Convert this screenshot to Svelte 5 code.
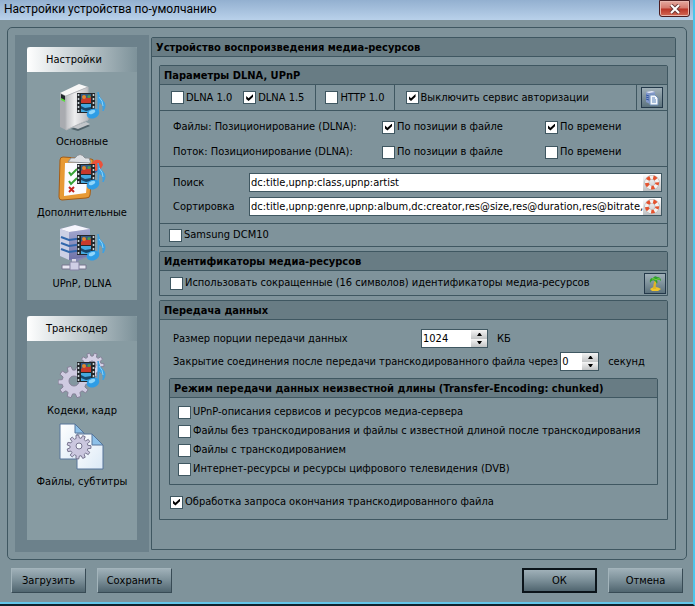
<script lang="ts">
  let dlna10 = $state(false)
  let dlna15 = $state(true)
  let http10 = $state(false)
  let noAuth = $state(true)
  let samsung = $state(false)
  let shortIds = $state(false)
  let handleEnd = $state(true)

  let search = $state('dc:title,upnp:class,upnp:artist')
  let sort = $state('dc:title,upnp:genre,upnp:album,dc:creator,res@size,res@duration,res@bitrate,dc:date')

  let chunkSize = $state(1024)
  let closeDelay = $state(0)

  let positioning = $state([
    { label: 'Файлы: Позиционирование (DLNA):', byPosition: true, byTime: true },
    { label: 'Поток: Позиционирование (DLNA):', byPosition: false, byTime: false }
  ])

  let chunked = $state([
    { label: 'UPnP-описания сервисов и ресурсов медиа-сервера', checked: false },
    { label: 'Файлы без транскодирования и файлы с известной длиной после транскодирования', checked: false },
    { label: 'Файлы с транскодированием', checked: false },
    { label: 'Интернет-ресурсы и ресурсы цифрового телевидения (DVB)', checked: false }
  ])

  const sections = [
    {
      title: 'Настройки',
      items: [
        { icon: 'server', label: 'Основные' },
        { icon: 'clipboard', label: 'Дополнительные' },
        { icon: 'network', label: 'UPnP, DLNA' }
      ]
    },
    {
      title: 'Транскодер',
      items: [
        { icon: 'gears', label: 'Кодеки, кадр' },
        { icon: 'files', label: 'Файлы, субтитры' }
      ]
    }
  ]

  // Outline of a cog wheel centred on cx, cy
  function gearPath(cx: number, cy: number, outer: number, inner: number, teeth: number) {
    const points: string[] = []
    const step = (Math.PI * 2) / teeth
    for (let i = 0; i < teeth; i++) {
      const a = i * step
      const corners = [[-0.32, inner], [-0.2, outer], [0.2, outer], [0.32, inner]]
      for (const [offset, r] of corners) {
        const x = cx + Math.cos(a + offset * step) * r
        const y = cy + Math.sin(a + offset * step) * r
        points.push(`${x.toFixed(2)} ${y.toFixed(2)}`)
      }
    }
    return `M${points.join('L')}Z`
  }
</script>

{#snippet media()}
  <rect x="19" y="10" width="18" height="20" fill="#23272b" />
  <path d="M20.5 11v18M35.5 11v18" stroke="#c9d3d8" stroke-width="1.6" stroke-dasharray="2 2" />
  <rect x="23" y="11" width="10" height="9" fill="#315a86" />
  <path d="M23 17l3-3 3 1 4-2v7H23z" fill="#c7392b" />
  <circle cx="26" cy="14" r="2" fill="#e2862e" />
  <circle cx="31" cy="13.5" r="1.6" fill="#4e9b4a" />
  <rect x="23" y="21" width="10" height="8" fill="#45a9e0" />
  <path d="M23 23l4 2 6-1v3l-5 1-5-2z" fill="#16476c" />
  <path d="M40 30V9q1 6 5 9 4 4 0 10 1-7-4-9z" fill="#3aa2e6" stroke="#3aa2e6" />
  <path d="M41 14q4 4 4 9" fill="none" stroke="#8fd4f8" />
  <ellipse cx="35" cy="30.5" rx="6.5" ry="4.8" fill="#2e9de6" transform="rotate(-22 35 30.5)" />
  <ellipse cx="34" cy="29" rx="3.4" ry="1.8" fill="#8fd6fb" transform="rotate(-22 34 29)" />
{/snippet}

{#snippet navIcon(name: string)}
  <svg class="nav-icon" viewBox="0 0 48 48" aria-hidden="true">
    {#if name === 'server'}
      <path d="M13 46l14-6 5 3-12 5z" fill="#50626a" />
      <path d="M14 44l14-5 4 2-12 5z" fill="#c3c6ca" />
      <path d="M2 10L21 1l9 3-22 9z" fill="#f7f7f7" />
      <path d="M2 10l6 3v34l-6-3z" fill="#a9abb0" />
      <path d="M8 13l22-9v33L8 47z" fill="url(#metal)" stroke="#b5b7bb" />
      <path d="M3 11l4 2v5l-4-2z" fill="#20262a" />
      <path d="M3 15l4 2v2l-4-2z" fill="#59dc3c" />
    {:else if name === 'clipboard'}
      <path d="M2 6q0-3 3-3l28 2q3 0 2 3l-3 33q0 3-4 3L4 46q-3 0-3-3z" fill="#e79a35" stroke="#a45d16" />
      <path d="M7 9l24-1-3 31-22 3z" fill="#fafcff" />
      <path d="M10 8l3-4h4q5-7 10 0h4l2 5z" fill="#dde0e4" stroke="#8b9197" />
      <path d="M11 18l2 3 6-6M11 27l2 3 6-6" fill="none" stroke="#36a235" stroke-width="2" />
      <path d="M11 33l5 5M16 33l-5 5" stroke="#c5241e" stroke-width="2" />
      <path d="M27 18l9-9 6 6-10 9z" fill="#3a65ad" />
      <path d="M33 10l4-4q7-1 8 5l-3 5-5 1z" fill="#ec513a" />
    {:else if name === 'network'}
      <path d="M2 4L17 0l15 4v27l-15 6L2 31z" fill="#8587b4" />
      <path d="M2 4l9 3v28l-9-4z" fill="#ccd0e5" />
      <path d="M11 7l21-3v27l-21 4z" fill="url(#rack)" />
      <path d="M2 4L17 0l15 4-21 3z" fill="#f5f5fc" />
      <path d="M3 12l8 3 21-3M3 18l8 3 21-3M3 24l8 3 21-3" fill="none" stroke="#3167ac" stroke-width="2" />
      <path d="M14 34h4v7h-4z" fill="#d9d9e6" />
      <path d="M4 40h24v4H4z" fill="#e8e7f2" stroke="#77778e" />
      <path d="M12 37h9v8h-9z" fill="#cfcee5" stroke="#8583a4" />
    {:else if name === 'gears'}
      <path d={gearPath(34, 13, 12, 9, 10)} fill="#d3cfe4" stroke="#858198" />
      <circle cx="34" cy="13" r="4" fill="#8397a0" stroke="#858198" />
      <path d={gearPath(16, 30, 16, 12, 10)} fill="#cfcbe1" stroke="#858198" />
      <circle cx="16" cy="29" r="5" fill="#8397a0" stroke="#858198" />
    {:else}
      <path d="M2 1h15l9 9v26H2z" fill="url(#paper)" stroke="#56759a" />
      <path d="M17 1v9h9z" fill="#8dc0e8" stroke="#56759a" />
      <path d="M19 11h15l11 11v24H19z" fill="url(#paper)" stroke="#56759a" />
      <path d="M34 11v11h11z" fill="#8dc0e8" stroke="#56759a" />
      <path d={gearPath(21, 24, 12, 9, 11)} fill="#cbc7df" stroke="#77748f" />
      <circle cx="21" cy="23" r="3" fill="#f2f6fb" stroke="#77748f" />
    {/if}
    {#if name !== 'files'}
      {@render media()}
    {/if}
  </svg>
{/snippet}

{#snippet buoy()}
  <svg viewBox="0 0 18 18" width="18" height="17" aria-hidden="true">
    <circle cx="9" cy="9" r="5.5" fill="none" stroke="#a9adb0" stroke-width="5" />
    <circle cx="9" cy="9" r="5.5" fill="none" stroke="#f3f1ef" stroke-width="4" />
    <circle
      cx="9"
      cy="9"
      r="5.5"
      fill="none"
      stroke="#e4532e"
      stroke-width="4"
      stroke-dasharray="3.4 3.51"
      stroke-dashoffset="1"
    />
  </svg>
{/snippet}

{#snippet spinner(id: string, value: number, change: (v: number) => void, small: boolean)}
  <span class="spinner" class:small>
    <input
      {id}
      type="text"
      inputmode="numeric"
      {value}
      onchange={(e) => change(Number(e.currentTarget.value) || 0)}
    />
    <span class="arrows">
      <button type="button" aria-label="Увеличить" onclick={() => change(value + 1)}>
        <svg viewBox="0 0 5 3" width="5" height="3"><path d="M0 3h5L3 0H2z" /></svg>
      </button>
      <button type="button" aria-label="Уменьшить" onclick={() => change(Math.max(0, value - 1))}>
        <svg viewBox="0 0 5 3" width="5" height="3"><path d="M0 0h5L3 3H2z" /></svg>
      </button>
    </span>
  </span>
{/snippet}

<svg class="defs" aria-hidden="true">
  <defs>
    <linearGradient id="metal">
      <stop offset="0" stop-color="#bfc0c4" />
      <stop offset="0.4" stop-color="#eeeeef" />
      <stop offset="1" stop-color="#bcbdc1" />
    </linearGradient>
    <linearGradient id="rack" x2="0" y2="1">
      <stop offset="0" stop-color="#a2a7cf" />
      <stop offset="1" stop-color="#6f72a8" />
    </linearGradient>
    <linearGradient id="paper" x2="1" y2="1">
      <stop offset="0" stop-color="#ffffff" />
      <stop offset="1" stop-color="#dbe9f6" />
    </linearGradient>
  </defs>
</svg>

<div class="window">
  <header class="titlebar">
    <h1>Настройки устройства по-умолчанию</h1>
    <button class="close" type="button" aria-label="Закрыть">
      <svg viewBox="0 0 12 10" width="12" height="10">
        <path d="M2 1l8 8M10 1L2 9" stroke="#6d3a3a" stroke-width="4" />
        <path d="M2 1l8 8M10 1L2 9" stroke="#ffffff" stroke-width="2" />
      </svg>
    </button>
  </header>

  <div class="frame">
    <nav class="sidebar">
      {#each sections as section}
        <section class="nav-section">
          <h2>{section.title}</h2>
          <div class="nav-items">
            {#each section.items as item}
              <button class="nav-item" type="button">
                {@render navIcon(item.icon)}
                <span>{item.label}</span>
              </button>
            {/each}
          </div>
        </section>
      {/each}
    </nav>

    <main class="group content">
      <h2>Устройство воспроизведения медиа-ресурсов</h2>
      <div class="content-body">
        <section class="group">
          <h3>Параметры DLNA, UPnP</h3>
          <div class="toolbar">
            <div class="segment">
              <label><input type="checkbox" bind:checked={dlna10} />DLNA 1.0</label>
              <label><input type="checkbox" bind:checked={dlna15} />DLNA 1.5</label>
            </div>
            <div class="segment narrow">
              <label><input type="checkbox" bind:checked={http10} />HTTP 1.0</label>
            </div>
            <div class="segment wide">
              <label><input type="checkbox" bind:checked={noAuth} />Выключить сервис авторизации</label>
            </div>
            <button class="tool" type="button" aria-label="Копировать параметры">
              <svg viewBox="0 0 16 16" width="16" height="16">
                <path d="M2 2l6-1 3 1v10l-5 2-4-2z" fill="#8298c9" />
                <path d="M2 2l6-1 3 1-6 1z" fill="#e9edf8" />
                <path d="M2 5l3 1M2 7l3 1M2 9l3 1" stroke="#3156a3" />
                <path d="M6 5h5l3 3v7H6z" fill="#f4f8fd" stroke="#6f8fb8" />
                <path d="M8 8h3M8 10h4M8 12h4" stroke="#5b83ba" />
              </svg>
            </button>
          </div>

          <div class="positioning">
            {#each positioning as row}
              <span>{row.label}</span>
              <label><input type="checkbox" bind:checked={row.byPosition} />По позиции в файле</label>
              <label><input type="checkbox" bind:checked={row.byTime} />По времени</label>
            {/each}
          </div>

          <div class="fields">
            <label for="search">Поиск</label>
            <div class="field">
              <input id="search" type="text" bind:value={search} />
              <button type="button" aria-label="Справка: поиск">{@render buoy()}</button>
            </div>
            <label for="sort">Сортировка</label>
            <div class="field">
              <input id="sort" type="text" bind:value={sort} />
              <button type="button" aria-label="Справка: сортировка">{@render buoy()}</button>
            </div>
          </div>

          <div class="samsung">
            <label><input type="checkbox" bind:checked={samsung} />Samsung DCM10</label>
          </div>
        </section>

        <section class="group">
          <h3>Идентификаторы медиа-ресурсов</h3>
          <div class="identifiers">
            <label>
              <input type="checkbox" bind:checked={shortIds} />Использовать сокращенные (16 символов) идентификаторы медиа-ресурсов
            </label>
            <button class="tool" type="button" aria-label="Сбросить идентификаторы">
              <svg viewBox="0 0 16 16" width="16" height="16">
                <path d="M3 14q5-4 11 0l-3 2H5z" fill="#f0c52c" />
                <path d="M8 5l2 1q-2 4-1 8H6q0-5 2-9z" fill="#e0b424" />
                <path d="M8 6Q5 4 3 8q-1-5 3-5 2-3 4-1 4 0 4 4-2-2-4-1 1 2 0 4-1-2-2-3z" fill="#2fa02c" />
                <path d="M5 4q2-1 4 1 2-2 4-1" fill="none" stroke="#7bd843" />
              </svg>
            </button>
          </div>
        </section>

        <section class="group">
          <h3>Передача данных</h3>
          <div class="transfer">
            <div class="row">
              <label class="size-label" for="chunk-size">Размер порции передачи данных</label>
              {@render spinner('chunk-size', chunkSize, (v) => (chunkSize = v), false)}
              <span class="unit">КБ</span>
            </div>
            <div class="row">
              <label for="close-delay">Закрытие соединения после передачи транскодированного файла через</label>
              {@render spinner('close-delay', closeDelay, (v) => (closeDelay = v), true)}
              <span class="unit">секунд</span>
            </div>

            <div class="group modes">
              <h4>Режим передачи данных неизвестной длины (Transfer-Encoding: chunked)</h4>
              <div class="mode-list">
                {#each chunked as mode}
                  <label><input type="checkbox" bind:checked={mode.checked} />{mode.label}</label>
                {/each}
              </div>
            </div>

            <label class="finish">
              <input type="checkbox" bind:checked={handleEnd} />Обработка запроса окончания транскодированного файла
            </label>
          </div>
        </section>
      </div>
    </main>
  </div>

  <footer class="actions">
    <button type="button">Загрузить</button>
    <button type="button">Сохранить</button>
    <span class="spacer"></span>
    <button class="default" type="button">ОК</button>
    <button type="button">Отмена</button>
  </footer>
</div>

<style>
  :global(body) {
    margin: 0;
    background: #7f939b;
  }

  .defs {
    position: absolute;
    width: 0;
    height: 0;
  }

  .window {
    display: flex;
    flex-direction: column;
    box-sizing: border-box;
    min-height: 100vh;
    border-right: 2px solid #4cc4ea;
    border-bottom: 2px solid #10222b;
    background: #7f939b;
    box-shadow: inset 0 -2px 0 #62c6ea;
    color: #000;
    font-family: 'DejaVu Sans Condensed', 'DejaVu Sans', sans-serif;
    font-size: 11px;
    line-height: 16px;
  }

  button,
  input {
    box-sizing: border-box;
    margin: 0;
    padding: 0;
    border: none;
    color: inherit;
    font: inherit;
  }

  h1,
  h2,
  h3,
  h4 {
    margin: 0;
    font-size: 11px;
  }

  label {
    display: flex;
    align-items: center;
    gap: 2px;
    white-space: nowrap;
  }

  .titlebar {
    display: flex;
    justify-content: space-between;
    height: 20px;
    padding: 0 3px 0 4px;
    background: linear-gradient(#93b0d0, #b9d1ea);
  }

  .titlebar h1 {
    font-family: Roboto, 'Open Sans', sans-serif;
    font-size: 12px;
    font-weight: 400;
    line-height: 18px;
  }

  .close {
    display: flex;
    align-items: center;
    justify-content: center;
    width: 31px;
    height: 17px;
    border: 1px solid #4b1c1f;
    border-radius: 0 0 3px 3px;
    background: linear-gradient(#e5a99f 0%, #d4786c 48%, #b93426 52%, #d36a55 100%);
    box-shadow: inset 0 0 0 1px #e8b5ac;
  }

  .frame {
    display: flex;
    flex: 1;
    gap: 2px;
    margin: 7px 6px 0 7px;
    padding: 7px 10px 7px 7px;
    border: 1px solid #3f5761;
    border-radius: 5px;
  }

  .sidebar {
    display: flex;
    flex-direction: column;
    gap: 16px;
    box-sizing: border-box;
    width: 134px;
    padding: 12px;
    background: #6c818b;
  }

  .nav-section {
    background: #879ba2;
  }

  .nav-section:last-child {
    flex: 1;
  }

  .nav-section h2 {
    height: 25px;
    border-radius: 3px 3px 0 0;
    padding-left: 19px;
    background: linear-gradient(90deg, #ffffff, #7d929a);
    font-weight: 400;
    line-height: 26px;
  }

  .nav-items {
    display: flex;
    flex-direction: column;
    gap: 4px;
    padding: 11px 0 8px;
  }

  .nav-item {
    display: flex;
    flex-direction: column;
    align-items: center;
    gap: 3px;
    background: none;
    white-space: nowrap;
  }

  .nav-icon {
    width: 48px;
    height: 48px;
  }

  .group {
    border: 1px solid #3f5761;
    border-radius: 2px 2px 0 0;
  }

  .group > h2,
  .group > h3,
  .group > h4 {
    padding: 2px 4px 0;
    border-bottom: 1px solid #3f5761;
    background: #687c84;
    line-height: 16px;
    white-space: nowrap;
  }

  .content {
    flex: 1;
    min-width: 0;
    margin: 2px 0;
  }

  .content-body {
    display: flex;
    flex-direction: column;
    gap: 4px;
    padding: 8px 7px;
  }

  input[type='checkbox'] {
    appearance: none;
    flex: none;
    width: 13px;
    height: 13px;
    border: 1px solid #3f5761;
    background: #fff;
  }

  input[type='checkbox']:checked::before {
    content: '';
    display: block;
    width: 7px;
    height: 7px;
    margin: 2px;
    background: #000;
    clip-path: polygon(0 30%, 35% 60%, 100% 0, 100% 40%, 35% 100%, 0 70%);
  }

  .toolbar {
    display: flex;
    align-items: stretch;
    height: 25px;
    border-bottom: 1px solid #3f5761;
  }

  .segment {
    display: flex;
    gap: 11px;
    padding: 0 11px;
    border-right: 1px solid #3f5761;
  }

  .narrow {
    padding: 0 9px;
  }

  .wide {
    flex: 1;
  }

  .tool {
    display: flex;
    align-items: center;
    justify-content: center;
    align-self: center;
    width: 22px;
    height: 21px;
    margin: 0 4px;
    border: 1px solid #24394a;
    background: linear-gradient(#a0b0b8, #5c727d);
  }

  .positioning {
    display: grid;
    grid-template-columns: 209px 163px 1fr;
    row-gap: 9px;
    padding: 8px 13px 6px;
    border-bottom: 1px solid #3f5761;
  }

  .fields {
    display: grid;
    grid-template-columns: 76px 1fr;
    row-gap: 5px;
    padding: 6px 5px 7px 13px;
    border-bottom: 1px solid #3f5761;
  }

  .field {
    display: flex;
    height: 19px;
    box-sizing: border-box;
    border: 1px solid #3f5761;
    background: #fff;
  }

  .field input {
    flex: 1;
    min-width: 0;
    padding-left: 1px;
    background: #fff;
    outline: none;
  }

  .field button {
    display: flex;
    align-items: center;
    width: 18px;
    background: linear-gradient(#ffffff, #bfc1c3);
  }

  .samsung {
    display: flex;
    height: 22px;
    padding-left: 9px;
  }

  .identifiers {
    display: flex;
    justify-content: space-between;
    height: 24px;
    padding-left: 10px;
  }

  .identifiers .tool {
    margin-right: 1px;
  }

  .transfer {
    display: flex;
    flex-direction: column;
    padding: 9px 9px 9px;
  }

  .row {
    display: flex;
    align-items: center;
    gap: 2px;
    padding-left: 4px;
    margin-bottom: 4px;
  }

  .size-label {
    width: 246px;
  }

  .unit {
    margin-left: 7px;
  }

  .spinner {
    display: flex;
    box-sizing: border-box;
    width: 67px;
    height: 19px;
    border: 1px solid #3f5761;
    background: #fff;
  }

  .spinner.small {
    width: 39px;
  }

  .spinner input {
    flex: 1;
    min-width: 0;
    padding-left: 1px;
    background: #fff;
    outline: none;
  }

  .arrows {
    display: flex;
    flex-direction: column;
    width: 16px;
  }

  .arrows button {
    display: flex;
    flex: 1;
    align-items: center;
    justify-content: center;
    background: linear-gradient(#f4f4f4, #c2c4c5);
  }

  .modes {
    margin-top: 3px;
  }

  .mode-list {
    display: flex;
    flex-direction: column;
    gap: 3px;
    padding: 6px 8px 7px;
  }

  .finish {
    align-self: flex-start;
    margin-top: 9px;
    padding-left: 1px;
  }

  .actions {
    display: flex;
    gap: 11px;
    padding: 8px 10px 11px 11px;
  }

  .actions button {
    width: 75px;
    height: 25px;
    border: 1px solid;
    border-color: #a3b4bb #384b55 #384b55 #a3b4bb;
    background: linear-gradient(#9fb0b8, #7a8e97 50%, #50656f);
  }

  .actions .default {
    border: 2px solid #0b141a;
  }

  .spacer {
    flex: 1;
  }
</style>
